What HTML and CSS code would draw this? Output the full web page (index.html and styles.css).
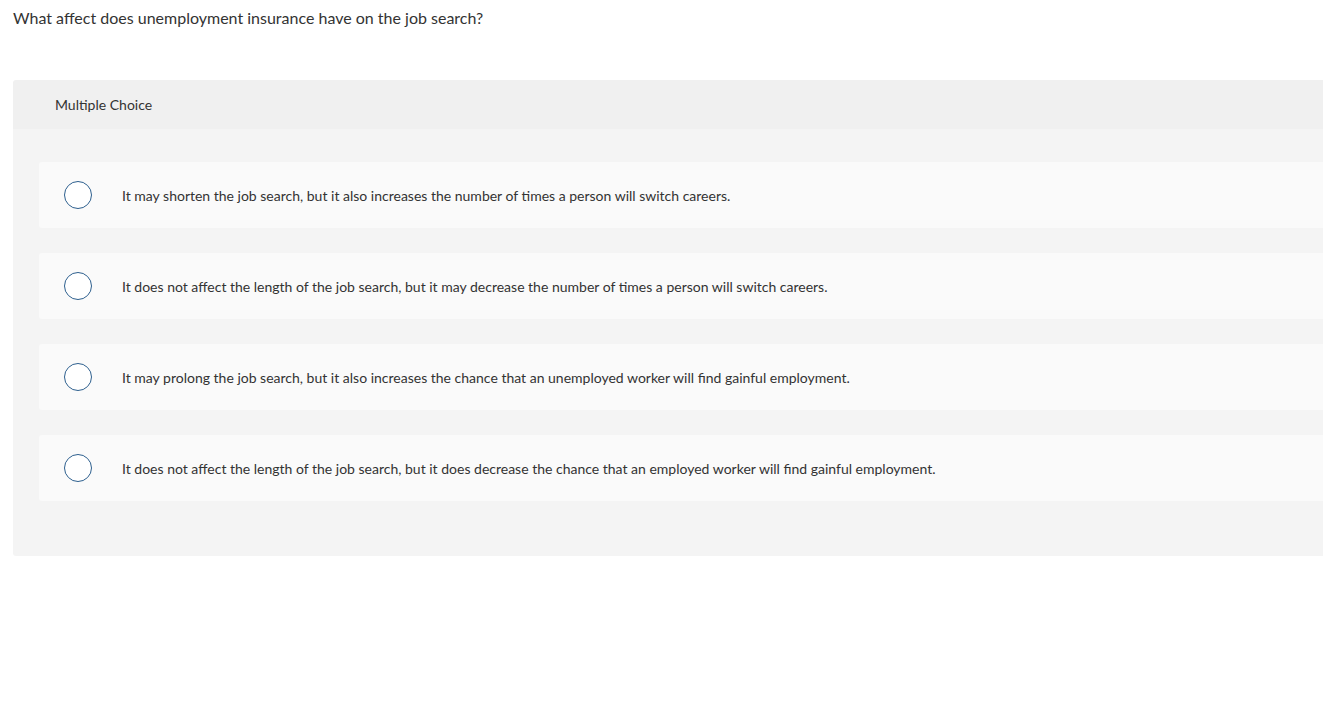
FILE: index.html
```html
<!DOCTYPE html>
<html lang="en">
<head>
    <meta charset="UTF-8">
    <title>Multiple Choice</title>
    <link rel="stylesheet" href="styles.css">
</head>
<body>
    <p class="question">What affect does unemployment insurance have on the job search?</p>

    <div class="panel">
        <div class="panel-header">Multiple Choice</div>
        <div class="panel-body">
            <label class="option">
                <span class="radio"></span>
                <span class="option-text">It may shorten the job search, but it also increases the number of times a person will switch careers.</span>
            </label>
            <label class="option">
                <span class="radio"></span>
                <span class="option-text">It does not affect the length of the job search, but it may decrease the number of times a person will switch careers.</span>
            </label>
            <label class="option">
                <span class="radio"></span>
                <span class="option-text">It may prolong the job search, but it also increases the chance that an unemployed worker will find gainful employment.</span>
            </label>
            <label class="option">
                <span class="radio"></span>
                <span class="option-text">It does not affect the length of the job search, but it does decrease the chance that an employed worker will find gainful employment.</span>
            </label>
        </div>
    </div>
</body>
</html>
```

FILE: styles.css
```css
body {
    font-family: Lato, 'Open Sans', Arial, sans-serif;
    background-color: #ffffff;
    color: #333333;
    margin: 0;
    padding: 0;
}

.question {
    font-size: 16px;
    margin: 0;
    padding: 9px 13px 0;
    line-height: 18px;
}

.panel {
    margin: 53px 0 0 13px;
    border-radius: 3px 0 0 3px;
    overflow: hidden;
}

.panel-header {
    background-color: #f0f0f0;
    height: 49px;
    line-height: 50px;
    padding-left: 42px;
    font-size: 14px;
}

.panel-body {
    background-color: #f4f4f4;
    padding: 33px 0 55px 26px;
    display: flex;
    flex-direction: column;
    gap: 25px;
}

.option {
    display: flex;
    align-items: center;
    height: 66px;
    background-color: #fafafa;
    border-radius: 3px 0 0 3px;
    padding-left: 25px;
    cursor: pointer;
}

.radio {
    width: 26px;
    height: 26px;
    border: 1.5px solid #2d5f8e;
    border-radius: 50%;
    background-color: #ffffff;
    flex-shrink: 0;
}

.option-text {
    margin-left: 30px;
    font-size: 14px;
}
```
